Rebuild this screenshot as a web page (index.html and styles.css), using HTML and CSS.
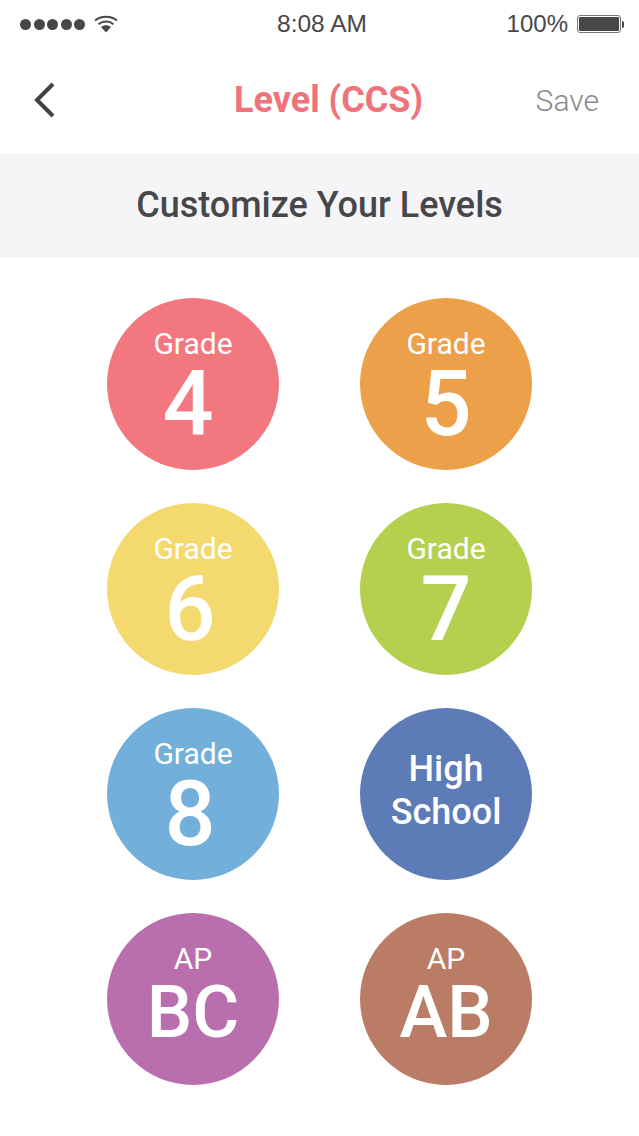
FILE: index.html
```html
<!DOCTYPE html>
<html>
<head>
<title>Level (CCS)</title>
<link rel="stylesheet" href="styles.css">
</head>
<body>

  <div class="status-bar">
    <div class="status-left">
      <div class="signal">
        <span class="dot"></span><span class="dot"></span><span class="dot"></span><span class="dot"></span><span class="dot"></span>
      </div>
      <svg class="wifi" width="24" height="18" viewBox="0 0 24 18">
        <path d="M1 5.5C7 .5 17 .5 23 5.5" fill="none" stroke="#47474a" stroke-width="2"/>
        <path d="M4.5 9.2C9 5.6 15 5.6 19.500 9.200" fill="none" stroke="#47474a" stroke-width="2"/>
        <path d="M7 12 12 17.500 17 12C14 9.800 10 9.800 7 12Z" fill="#47474a"/>
      </svg>
    </div>
    <div class="status-time">8:08 AM</div>
    <div class="status-right">
      <span>100%</span>
      <div class="battery"><div class="battery-fill"></div></div>
      <div class="battery-tip"></div>
    </div>
  </div>

  <div class="nav-bar">
    <svg class="back" width="24" height="36" viewBox="0 0 24 36">
      <path d="M20 2 4 18 20 34" fill="none" stroke="#414145" stroke-width="4"/>
    </svg>
    <h1 class="nav-title">Level (CCS)</h1>
    <div class="nav-save">Save</div>
  </div>

  <div class="banner">Customize Your Levels</div>

  <div class="levels">
    <div class="level grade red"><span class="small">Grade</span><span class="big shift-4">4</span></div>
    <div class="level grade orange"><span class="small">Grade</span><span class="big">5</span></div>
    <div class="level grade yellow"><span class="small">Grade</span><span class="big shift-6">6</span></div>
    <div class="level grade green"><span class="small">Grade</span><span class="big">7</span></div>
    <div class="level grade blue"><span class="small">Grade</span><span class="big shift-6">8</span></div>
    <div class="level navy"><span class="school">High<br>School</span></div>
    <div class="level purple"><span class="small">AP</span><span class="big letters">BC</span></div>
    <div class="level brown"><span class="small">AP</span><span class="big letters">AB</span></div>
  </div>

</body>
</html>
```

FILE: styles.css
```css
body {
  margin: 0;
  background: #fff;
  font-family: Roboto, sans-serif;
  color: #47474a;
}

.status-bar {
  height: 48px;
  display: flex;
  align-items: center;
  justify-content: space-between;
  padding: 0 15px 0 20px;
  font-family: "Liberation Sans", sans-serif;
  font-size: 24px;
}

.status-left,
.status-right {
  width: 180px;
  display: flex;
  align-items: center;
}

.status-right {
  justify-content: flex-end;
}

.status-time {
  font-size: 24.5px;
}

.signal {
  display: flex;
  gap: 2.5px;
  margin-right: 9px;
}

.dot {
  width: 11px;
  height: 11px;
  border-radius: 50%;
  background: #47474a;
}

.wifi {
  display: block;
}

.battery {
  box-sizing: border-box;
  width: 44px;
  height: 18px;
  margin-left: 9px;
  padding: 1px;
  border: 1px solid #77777a;
  border-radius: 3px;
}

.battery-fill {
  height: 100%;
  background: #47474a;
  border-radius: 1px;
}

.battery-tip {
  width: 2px;
  height: 7px;
  margin-left: 1px;
  background: #47474a;
  border-radius: 0 2px 2px 0;
}

.nav-bar {
  box-sizing: border-box;
  height: 106px;
  display: flex;
  align-items: center;
  padding: 0 40px 2px 33px;
}

.back {
  display: block;
  margin-bottom: 1px;
}

.nav-title {
  margin: 0 0 0 177px;
  font-size: 36px;
  font-weight: 700;
  color: #ee737b;
}

.nav-save {
  margin-left: auto;
  font-weight: 300;
  font-size: 30px;
  color: #88888c;
}

.banner {
  height: 104px;
  line-height: 102px;
  text-align: center;
  background: #f5f5f7;
  font-size: 36px;
  font-weight: 500;
}

.levels {
  display: grid;
  grid-template-columns: 172px 172px;
  gap: 33px 81px;
  justify-content: center;
  padding-top: 40px;
}

.level {
  box-sizing: border-box;
  height: 172px;
  border-radius: 50%;
  display: flex;
  flex-direction: column;
  align-items: center;
  justify-content: center;
  color: #fff;
}

.grade {
  padding-top: 8px;
}

.small {
  margin-top: -2px;
  font-size: 30px;
  line-height: 30px;
}

.big {
  font-size: 90px;
  font-weight: 500;
  line-height: 82px;
  margin-top: 5px;
}

.shift-4 {
  margin-right: 10px;
}

.shift-6 {
  margin-right: 6px;
}

.letters {
  font-size: 72px;
  line-height: 80px;
  margin-top: -1px;
}

.school {
  margin-top: -6px;
  font-size: 36px;
  font-weight: 500;
  line-height: 43px;
  text-align: center;
}

.red { background: #f3777f; }
.orange { background: #eda04a; }
.yellow { background: #f4d96f; }
.green { background: #b5d04e; }
.blue { background: #72afdb; }
.navy { background: #5c7bb7; }
.purple { background: #b96fae; }
.brown { background: #bb7c65; }
```
